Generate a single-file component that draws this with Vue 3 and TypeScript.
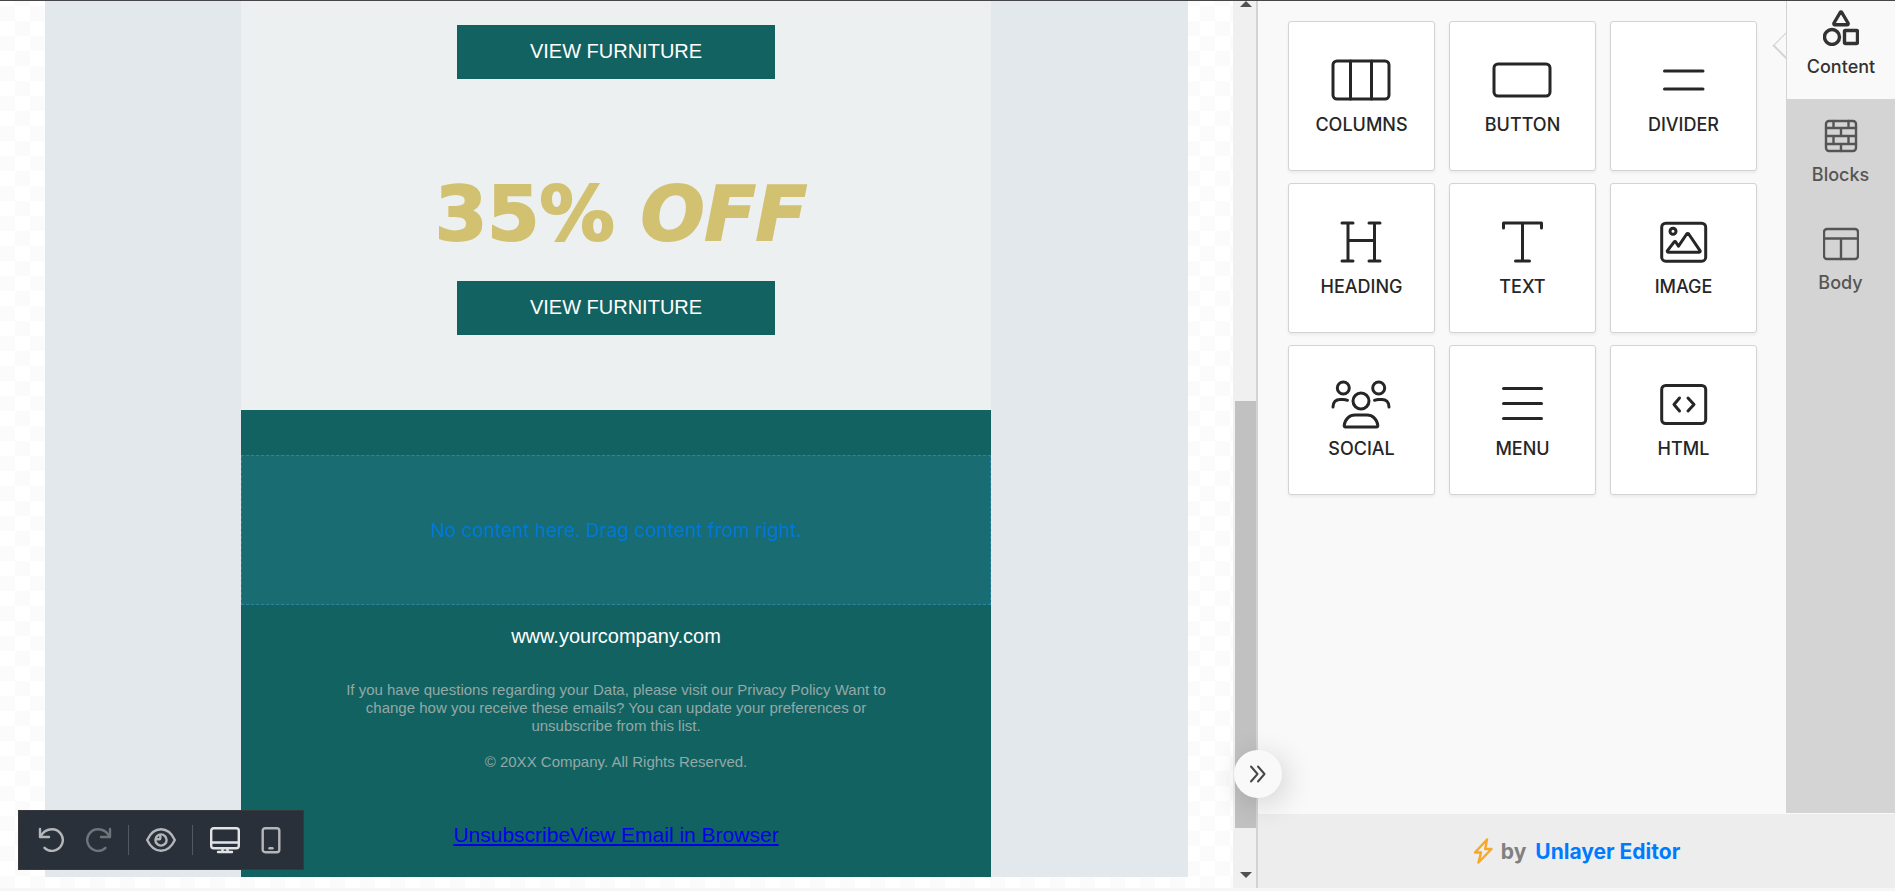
<script setup lang="ts">
interface Tool {
  id: string
  label: string
}

const tools: Tool[] = [
  { id: 'columns', label: 'COLUMNS' },
  { id: 'button', label: 'BUTTON' },
  { id: 'divider', label: 'DIVIDER' },
  { id: 'heading', label: 'HEADING' },
  { id: 'text', label: 'TEXT' },
  { id: 'image', label: 'IMAGE' },
  { id: 'social', label: 'SOCIAL' },
  { id: 'menu', label: 'MENU' },
  { id: 'html', label: 'HTML' },
]
</script>

<template>
  <div class="app">
    <main class="stage">
      <div class="canvas">
        <div class="email">
          <div class="sheet">
            <section class="offer">
              <a class="cta" href="#">VIEW FURNITURE</a>
              <h1 class="headline">35% <em>OFF</em></h1>
              <a class="cta" href="#">VIEW FURNITURE</a>
            </section>
            <section class="foot">
              <div class="dropzone">No content here. Drag content from right.</div>
              <p class="site">www.yourcompany.com</p>
              <p class="legal">
                If you have questions regarding your Data, please visit our Privacy Policy Want to
                change how you receive these emails? You can update your preferences or unsubscribe
                from this list.
              </p>
              <p class="legal">© 20XX Company. All Rights Reserved.</p>
              <p class="links"><a href="#">Unsubscribe</a><a href="#">View Email in Browser</a></p>
            </section>
          </div>
        </div>
      </div>
      <div class="scrollbar">
        <svg class="arrow" width="12" height="6" viewBox="0 0 12 6"><path d="M6 0l6 6H0z" /></svg>
        <div class="track"><div class="thumb"></div></div>
        <svg class="arrow" width="12" height="6" viewBox="0 0 12 6"><path d="M0 0h12L6 6z" /></svg>
      </div>

      <div class="toolbar">
        <button type="button" aria-label="Undo">
          <svg width="26" height="26" viewBox="0 0 26 26">
            <path d="M2 2v8h9M2.500 9.500C5 4.500 9.500 2.200 14 2.200a10.800 10.800 0 1 1-7.500 18.600" />
          </svg>
        </button>
        <button type="button" aria-label="Redo" class="dim">
          <svg width="26" height="26" viewBox="0 0 26 26">
            <path d="M24 2v8h-9M23.500 9.500C21 4.500 16.500 2.200 12 2.200a10.800 10.800 0 1 0 7.500 18.600" />
          </svg>
        </button>
        <span class="bar"></span>
        <button type="button" aria-label="Preview">
          <svg width="30" height="24" viewBox="0 0 30 24">
            <path d="M1.200 12C4 6 9 1.300 15 1.300S26 6 28.800 12C26 18 21 22.700 15 22.700S4 18 1.200 12z" />
            <circle cx="15" cy="12" r="5.600" />
            <path d="M14.300 8v2.300c0 .6-.4 1-1 1H11" />
          </svg>
        </button>
        <span class="bar"></span>
        <button type="button" aria-label="Desktop" class="on">
          <svg width="30" height="28" viewBox="0 0 30 28">
            <rect x="1.200" y="2.200" width="27.600" height="20" rx="2.500" />
            <path d="M1.500 16.500h27M12.500 22.500v3.500M17.500 22.500v3.500M8 26h14" />
          </svg>
        </button>
        <button type="button" aria-label="Mobile">
          <svg width="20" height="28" viewBox="0 0 20 28">
            <rect x="1.700" y="2.200" width="16.600" height="24" rx="2.500" />
            <path d="M8.500 22.300h3" />
          </svg>
        </button>
      </div>
    </main>

    <aside class="side">
      <button type="button" class="collapse" aria-label="Collapse panel">
        <svg width="18" height="18" viewBox="0 0 18 18"><path d="M2 1.500l6.500 7.500L2 16.500M9 1.500l6.500 7.500L9 16.500" /></svg>
      </button>
      <div class="panel">
        <div class="grid">
          <button v-for="t in tools" :key="t.id" type="button" class="card">
            <svg width="60" height="48" viewBox="1 0 60 48">
              <template v-if="t.id === 'columns'">
                <rect x="2" y="5" width="56" height="38" rx="4" />
                <path d="M19.500 5v38M40.500 5v38" />
              </template>
              <rect v-else-if="t.id === 'button'" x="2" y="8" width="56" height="32" rx="4" />
              <path v-else-if="t.id === 'divider'" d="M11.500 15H50M11.500 33H50" />
              <path
                v-else-if="t.id === 'heading'"
                d="M11 5h11M38 5h11M11 43h11M38 43h11M17 5v38M43.500 5v38M17 22.500h26.500"
              />
              <path v-else-if="t.id === 'text'" d="M11.500 10V5h38v5M30.500 5v38M23.500 43h14" />
              <template v-else-if="t.id === 'image'">
                <rect x="8.700" y="5.200" width="44" height="38" rx="4" />
                <circle cx="20" cy="13.200" r="3" />
                <path d="M15.200 34.200h31c1 0 1.300-.8.800-1.600L35.700 16c-.6-.8-1.400-.8-2 0L25.500 28.200l-2.600-4c-.6-.8-1.300-.8-1.900 0l-6.500 8.400c-.5.800-.2 1.600.7 1.600z" />
              </template>
              <template v-else-if="t.id === 'social'">
                <circle cx="12.300" cy="8" r="6" />
                <circle cx="47.700" cy="8" r="6" />
                <circle cx="30" cy="21" r="8" />
                <path d="M2 27c0-5 3-7.500 7-7.500h3c2 0 3 .2 4.500.8M58 27c0-5-3-7.500-7-7.500h-3c-2 0-3 .2-4.500.8" />
                <path d="M14.500 47h31c1 0 1.500-.6 1.300-1.600C46 39 41.500 35 36 35H24c-5.500 0-10 4-10.800 10.400-.2 1 .3 1.600 1.300 1.600z" />
              </template>
              <path v-else-if="t.id === 'menu'" d="M11.500 8.500h38M11.500 23.500h38M11.500 38.500h38" />
              <template v-else>
                <rect x="8.700" y="5.500" width="44" height="38" rx="4" />
                <path d="M26.500 18L21 24.500l5.500 6.500M35 18l6 6.500-6 6.500" />
              </template>
            </svg>
            <span>{{ t.label }}</span>
          </button>
        </div>
        <nav class="rail">
          <button type="button" class="tab active">
            <svg width="36" height="36" viewBox="0 0 36 36">
              <path d="M17.200 2.500L11 13c-.5 1 0 1.700 1 1.700h12c1 0 1.500-.7 1-1.700L18.800 2.500c-.5-.7-1.100-.7-1.600 0z" />
              <circle cx="9" cy="27" r="7.500" />
              <rect x="21.500" y="20.500" width="13" height="13" rx="1" />
            </svg>
            <span>Content</span>
          </button>
          <button type="button" class="tab">
            <svg width="36" height="36" viewBox="0 0 36 36">
              <rect x="3" y="3" width="30" height="30" rx="3" />
              <path d="M3 10h30M3 18h30M3 26h30M10.500 3v7M25.500 3v7M18 10v8M10.500 18v8M25.500 18v8M18 26v7" />
            </svg>
            <span>Blocks</span>
          </button>
          <button type="button" class="tab">
            <svg width="36" height="36" viewBox="0 0 36 36">
              <rect x="1" y="3" width="34" height="30" rx="3" />
              <path d="M1 12.500h34M18 12.500V33" />
            </svg>
            <span>Body</span>
          </button>
        </nav>
      </div>
      <footer class="credit">
        <svg width="20" height="26" viewBox="0 0 20 26">
          <path d="M14 1.500L2 14.500h6L5.500 24.500 18.500 11h-6.300z" />
        </svg>
        <span>by</span>
        <a href="#">Unlayer Editor</a>
      </footer>
    </aside>
  </div>
</template>

<style>
body {
  margin: 0;
  background: #f6f6f8;
}
</style>

<style scoped>
* {
  box-sizing: border-box;
}
.app {
  display: flex;
  height: calc(100vh - 3px);
  border-top: 1px solid #464648;
  font-family: Inter, "Liberation Sans", sans-serif;
}
button {
  font-family: inherit;
  border: 0;
  padding: 0;
  cursor: pointer;
}
svg {
  display: block;
  fill: none;
  stroke: currentColor;
  stroke-linecap: round;
  stroke-linejoin: round;
}
.stage {
  position: relative;
  flex: 1;
  min-width: 0;
  display: flex;
}
.canvas {
  flex: 1;
  min-width: 0;
  display: flex;
  overflow: hidden;
  padding: 0 45px 11px;
  background: repeating-conic-gradient(#fff 0 25%, #fbfbfb 0 50%) 0 5px / 30px 30px;
}
.email {
  flex: 1;
  display: flex;
  justify-content: center;
  padding-right: 1px;
  background: #e2e8ec;
}
.sheet {
  width: 750px;
  display: flex;
  flex-direction: column;
  font-family: "Liberation Sans", Arial, sans-serif;
  text-align: center;
}
.offer {
  display: flex;
  flex-direction: column;
  align-items: center;
  padding: 24px 0 75px;
  background: #ecf0f1;
}
.cta {
  width: 318px;
  padding-bottom: 2px;
  line-height: 52px;
  background: #126262;
  color: #fff;
  font-size: 20px;
  text-decoration: none;
}
.headline {
  margin: 90px 0 22px;
  padding-left: 10px;
  color: #d2c171;
  font: 900 75px/90px "Arial Black", "DejaVu Sans", sans-serif;
  -webkit-text-stroke: 2px #d2c171;
}
.foot {
  flex: 1;
  padding-top: 45px;
  background: #126262;
}
.dropzone {
  height: 150px;
  display: flex;
  align-items: center;
  justify-content: center;
  border: 1px dashed #2c84a4;
  background: #186c72;
  color: #0078d8;
  font-family: Inter, "Liberation Sans", sans-serif;
  font-size: 19px;
}
.site {
  margin: 19px 0 33px;
  color: #fff;
  font-size: 20px;
  line-height: 24px;
}
.legal {
  margin: 0 auto 18px;
  width: 550px;
  color: #92a9a7;
  font-size: 15px;
  line-height: 18px;
}
.links {
  margin: 51px 0 0;
  font-size: 21px;
  line-height: 26px;
}
.links a {
  color: #00e;
}
.scrollbar {
  width: 23px;
  display: flex;
  flex-direction: column;
  align-items: center;
  padding: 0 0 10px 2px;
  background: #f0f0f0;
}
.arrow {
  fill: #505050;
  stroke: none;
}
.track {
  flex: 1;
  align-self: stretch;
  display: flex;
  flex-direction: column;
  justify-content: flex-end;
  padding-bottom: 44px;
}
.thumb {
  height: 52%;
  background: #c1c1c1;
}
.toolbar {
  position: absolute;
  left: 18px;
  bottom: 18px;
  height: 60px;
  display: flex;
  align-items: center;
  padding: 0 22px 0 19px;
  border: 1px solid #37393d;
  background: #2a303a;
}
.toolbar button {
  display: flex;
  background: none;
  color: #b4b6ba;
}
.toolbar svg {
  stroke-width: 2.400;
}
.toolbar .dim {
  margin-left: 22px;
  color: #6f737a;
}
.toolbar .on {
  margin-right: 21px;
  color: #e2e3e6;
}
.bar {
  width: 1px;
  height: 30px;
  margin: 0 17px 0 16px;
  background: #55595f;
}
.side {
  position: relative;
  flex: none;
  width: 639px;
  display: flex;
  flex-direction: column;
  border-left: 2px solid #d3d3d3;
  background: #f9f9f9;
}
.collapse {
  position: absolute;
  left: -24px;
  bottom: 90px;
  width: 48px;
  height: 48px;
  display: flex;
  align-items: center;
  justify-content: center;
  border-radius: 50%;
  background: #f9f9f9;
  color: #484848;
  box-shadow: 4px 6px 30px rgba(0, 0, 0, 0.16);
}
.collapse svg {
  stroke-width: 2;
}
.panel {
  flex: 1;
  display: flex;
  overflow: hidden;
}
.grid {
  flex: 1;
  display: grid;
  grid-template-columns: repeat(3, 1fr);
  grid-auto-rows: 150px;
  gap: 12px 14px;
  padding: 20px 29px 0 30px;
}
.card {
  display: flex;
  flex-direction: column;
  align-items: center;
  gap: 10px;
  padding-top: 34px;
  border: 1px solid #d3d3d3;
  border-radius: 3px;
  background: #fff;
  color: #262626;
  font-size: 18px;
  font-weight: 500;
  line-height: 22px;
  box-shadow: 0 2px 3px rgba(0, 0, 0, 0.06);
}
.card svg {
  stroke-width: 3;
  overflow: visible;
}
.rail {
  position: relative;
  width: 109px;
  margin-bottom: 1px;
  background: #d4d4d4;
}
.tab {
  width: 100%;
  height: 108px;
  display: flex;
  flex-direction: column;
  align-items: center;
  gap: 10px;
  padding-top: 19px;
  background: none;
  color: #555;
  font-size: 18px;
  font-weight: 500;
  line-height: 22px;
}
.tab svg {
  stroke-width: 2.400;
}
.tab.active {
  position: relative;
  height: 98px;
  padding-top: 9px;
  border-left: 1px solid #d3d3d3;
  background: #f9f9f9;
  color: #333;
}
.tab.active svg {
  stroke-width: 3.400;
}
.rail::before {
  content: "";
  position: absolute;
  left: -9px;
  top: 34px;
  width: 19px;
  height: 19px;
  border: solid #d3d3d3;
  border-width: 0 0 2px 1px;
  transform: rotate(45deg);
}
.credit {
  height: 74px;
  display: flex;
  align-items: center;
  justify-content: center;
  background: #ededed;
  color: #808080;
  font-size: 21px;
  font-weight: 700;
}
.credit svg {
  color: #f9a825;
  stroke-width: 2.400;
}
.credit span {
  margin: 0 9px 0 8px;
}
.credit a {
  color: #007bff;
  text-decoration: none;
}
</style>
